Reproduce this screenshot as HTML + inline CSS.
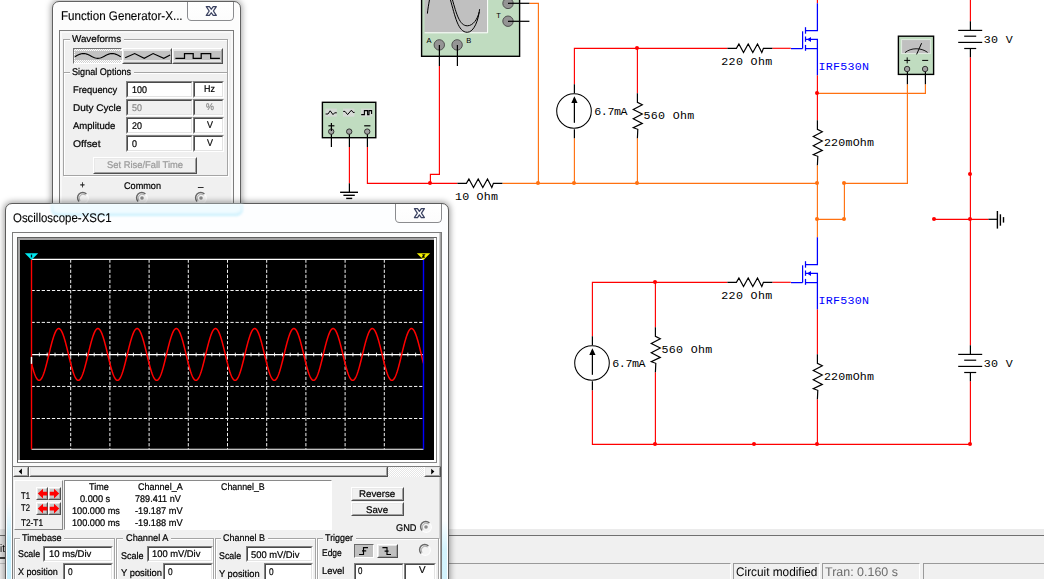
<!DOCTYPE html>
<html><head><meta charset="utf-8"><title>Multisim</title>
<style>

html,body{margin:0;padding:0}
html{width:1044px;height:579px;overflow:hidden}
body{width:1044px;height:579px;overflow:hidden;background:#fff;position:relative;font-family:"Liberation Sans",sans-serif}
.a{position:absolute}
.t{white-space:nowrap;font-family:"Liberation Sans",sans-serif;-webkit-text-stroke:0.22px currentColor;text-rendering:geometricPrecision}
#root{position:absolute;left:0;top:0;width:1044px;height:579px;overflow:hidden;background:#fff}
#ckt{position:absolute;left:0;top:0}

</style></head>
<body>
<div id="root">
<div class="a " style="left:0px;top:529px;width:1044px;height:7px;background:#ebebeb;"></div>
<div class="a " style="left:0px;top:535.2px;width:1044px;height:1.2px;background:#707070;"></div>
<div class="a " style="left:0px;top:536.4px;width:1044px;height:42.6px;background:#f0f0f0;"></div>
<div class="a " style="left:-5px;top:562.6px;width:736px;height:27.4px;border-top:1px solid #9a9a9a;border-left:1px solid #9a9a9a;border-right:1px solid #fff;box-sizing:border-box;"></div>
<div class="a " style="left:733px;top:562.6px;width:86.6px;height:27.4px;border-top:1px solid #9a9a9a;border-left:1px solid #9a9a9a;border-right:1px solid #fff;box-sizing:border-box;"></div>
<div class="a " style="left:822px;top:562.6px;width:98.2px;height:27.4px;border-top:1px solid #9a9a9a;border-left:1px solid #9a9a9a;border-right:1px solid #fff;box-sizing:border-box;"></div>
<div class="a " style="left:923.4px;top:562.6px;width:136.6px;height:27.4px;border-top:1px solid #9a9a9a;border-left:1px solid #9a9a9a;border-right:1px solid #fff;box-sizing:border-box;"></div>
<div class="a t" style="left:735.8px;top:565.89px;font-size:12.5px;line-height:12.5px;color:#000;transform-origin:0 10.58px;transform:scale(0.945,1);-webkit-text-stroke:0;">Circuit modified</div>
<div class="a t" style="left:825.4px;top:565.89px;font-size:12.5px;line-height:12.5px;color:#6d6d6d;transform-origin:0 10.58px;transform:scale(0.997,1);-webkit-text-stroke:0;">Tran: 0.160 s</div>
<div class="a " style="left:0px;top:536.4px;width:6px;height:21.6px;background:#e6e6e6;"></div>
<div class="a " style="left:0px;top:557.1px;width:6px;height:1.5px;background:#3c3c3c;"></div>
<div class="a " style="left:0px;top:562.8px;width:6px;height:1px;background:#c4c4c4;"></div>
<div class="a t" style="left:-0.4px;top:544.03px;font-size:11px;line-height:11px;color:#000;transform-origin:0 9.31px;transform:scale(0.873,1);-webkit-text-stroke:0;">it</div>
<svg id="ckt" width="1044" height="579" viewBox="0 0 1044 579">
<path d="M439.4 66 L439.4 174.3 L430.4 174.3 L430.4 183.3" stroke="#ff0000" stroke-width="1.15" fill="none" />
<path d="M349.4 147 L349.4 183.3" stroke="#ff0000" stroke-width="1.15" fill="none" />
<path d="M367.4 147 L367.4 183.3 L457.4 183.3" stroke="#ff0000" stroke-width="1.15" fill="none" />
<path d="M502.4 183.3 L817.4 183.3" stroke="#ff7110" stroke-width="1.15" fill="none" />
<path d="M529.4 3.3 L538.4 3.3 L538.4 183.3" stroke="#ff7110" stroke-width="1.15" fill="none" />
<path d="M574.4 84.3 L574.4 48.3 L727.4 48.3" stroke="#ff0000" stroke-width="1.15" fill="none" />
<path d="M637.4 48.3 L637.4 93.3" stroke="#ff0000" stroke-width="1.15" fill="none" />
<path d="M574.4 138.3 L574.4 183.3" stroke="#ff7110" stroke-width="1.15" fill="none" />
<path d="M637.4 138.3 L637.4 183.3" stroke="#ff7110" stroke-width="1.15" fill="none" />
<path d="M772.4 48.3 L790.8 48.3" stroke="#ff0000" stroke-width="1.15" fill="none" />
<path d="M817.4 0 L817.4 3.3" stroke="#ff0000" stroke-width="1.15" fill="none" />
<path d="M817.4 75.3 L817.4 120.3" stroke="#ff0000" stroke-width="1.15" fill="none" />
<path d="M817.4 93.3 L925.4 93.3 L925.4 84.3" stroke="#ff7110" stroke-width="1.15" fill="none" />
<path d="M907.4 84.3 L907.4 183.3 L844.4 183.3 L844.4 219.3 L817.4 219.3" stroke="#ff7110" stroke-width="1.15" fill="none" />
<path d="M817.4 165.3 L817.4 237.3" stroke="#ff7110" stroke-width="1.15" fill="none" />
<path d="M970.4 0 L970.4 21.3" stroke="#ff0000" stroke-width="1.15" fill="none" />
<path d="M970.4 57.3 L970.4 345.3" stroke="#ff0000" stroke-width="1.15" fill="none" />
<path d="M970.4 381.3 L970.4 444.3 L592.4 444.3 L592.4 390.3" stroke="#ff0000" stroke-width="1.15" fill="none" />
<path d="M934.4 219.3 L988.4 219.3" stroke="#ff0000" stroke-width="1.15" fill="none" />
<path d="M592.4 336.3 L592.4 282.3 L727.4 282.3" stroke="#ff0000" stroke-width="1.15" fill="none" />
<path d="M655.4 282.3 L655.4 327.3" stroke="#ff0000" stroke-width="1.15" fill="none" />
<path d="M655.4 372.3 L655.4 444.3" stroke="#ff0000" stroke-width="1.15" fill="none" />
<path d="M772.4 282.3 L790.8 282.3" stroke="#ff0000" stroke-width="1.15" fill="none" />
<path d="M817.4 309.3 L817.4 354.3" stroke="#ff0000" stroke-width="1.15" fill="none" />
<path d="M817.4 399.3 L817.4 444.3" stroke="#ff0000" stroke-width="1.15" fill="none" />
<path d="M457.4 183.3 L466.4 183.3 L468.9 179 L473.5 187.6 L478.2 179 L482.8 187.6 L487.5 179 L491.8 187.6 L493.4 183.3 L502.4 183.3" stroke="#000000" stroke-width="1.18" fill="none" stroke-linejoin="miter"/>
<text x="455" y="199.9" fill="#000" font-size="11.67" font-family="Liberation Mono" letter-spacing="0.2">10 Ohm</text>
<path d="M727.4 48.3 L736.4 48.3 L738.9 44 L743.5 52.6 L748.2 44 L752.8 52.6 L757.5 44 L761.8 52.6 L763.4 48.3 L772.4 48.3" stroke="#000000" stroke-width="1.18" fill="none" stroke-linejoin="miter"/>
<text x="721.2" y="64.9" fill="#000" font-size="11.67" font-family="Liberation Mono" letter-spacing="0.35">220 Ohm</text>
<path d="M727.4 282.3 L736.4 282.3 L738.9 278 L743.5 286.6 L748.2 278 L752.8 286.6 L757.5 278 L761.8 286.6 L763.4 282.3 L772.4 282.3" stroke="#000000" stroke-width="1.18" fill="none" stroke-linejoin="miter"/>
<text x="721.2" y="298.9" fill="#000" font-size="11.67" font-family="Liberation Mono" letter-spacing="0.35">220 Ohm</text>
<path d="M574.4 84.3 L574.4 93.3" stroke="#000000" stroke-width="1.2" fill="none" />
<path d="M574.4 129.3 L574.4 138.3" stroke="#000000" stroke-width="1.2" fill="none" />
<circle cx="574" cy="111" r="17.3" stroke="#000" stroke-width="1.05" fill="none"/>
<path d="M574.4 122.8 L574.4 98.3" stroke="#000000" stroke-width="1.25" fill="none" />
<path d="M574.4 96.3 L571.3 103.1 L577.5 103.1 Z" fill="#000"/>
<text x="594.2" y="115" fill="#000" font-size="11.67" font-family="Liberation Mono" letter-spacing="-0.4">6.7mA</text>
<path d="M637.4 93.3 L637.4 102.3 L642.31 104.8 L633.28 109.4 L642.31 114.1 L633.28 118.7 L642.31 123.4 L633.28 127.7 L637.8 129.3 L637.4 138.3" stroke="#000000" stroke-width="1.18" fill="none" stroke-linejoin="miter"/>
<text x="643.5" y="118.8" fill="#000" font-size="11.67" font-family="Liberation Mono" letter-spacing="0.3">560 Ohm</text>
<path d="M592.4 336.3 L592.4 345.3" stroke="#000000" stroke-width="1.2" fill="none" />
<path d="M592.4 381.3 L592.4 390.3" stroke="#000000" stroke-width="1.2" fill="none" />
<circle cx="592" cy="363" r="17.3" stroke="#000" stroke-width="1.05" fill="none"/>
<path d="M592.4 374.8 L592.4 350.3" stroke="#000000" stroke-width="1.25" fill="none" />
<path d="M592.4 348.3 L589.3 355.1 L595.5 355.1 Z" fill="#000"/>
<text x="612.2" y="367" fill="#000" font-size="11.67" font-family="Liberation Mono" letter-spacing="-0.4">6.7mA</text>
<path d="M655.4 327.3 L655.4 336.3 L660.31 338.8 L651.28 343.4 L660.31 348.1 L651.28 352.7 L660.31 357.4 L651.28 361.7 L655.8 363.3 L655.4 372.3" stroke="#000000" stroke-width="1.18" fill="none" stroke-linejoin="miter"/>
<text x="661.5" y="352.8" fill="#000" font-size="11.67" font-family="Liberation Mono" letter-spacing="0.3">560 Ohm</text>
<path d="M817.4 120.3 L817.4 129.3 L822.31 131.8 L813.28 136.4 L822.31 141.1 L813.28 145.7 L822.31 150.4 L813.28 154.7 L817.8 156.3 L817.4 165.3" stroke="#000000" stroke-width="1.18" fill="none" stroke-linejoin="miter"/>
<text x="823.9" y="146.4" fill="#000" font-size="11.67" font-family="Liberation Mono" letter-spacing="0.2">220mOhm</text>
<path d="M817.4 354.3 L817.4 363.3 L822.31 365.8 L813.28 370.4 L822.31 375.1 L813.28 379.7 L822.31 384.4 L813.28 388.7 L817.8 390.3 L817.4 399.3" stroke="#000000" stroke-width="1.18" fill="none" stroke-linejoin="miter"/>
<text x="823.9" y="380.4" fill="#000" font-size="11.67" font-family="Liberation Mono" letter-spacing="0.2">220mOhm</text>
<path d="M817.4 3.3 L817.4 30.7 L805.5 30.7" stroke="#0000ff" stroke-width="1.25" fill="none" />
<path d="M805.5 27.2 L805.5 33.7" stroke="#0000ff" stroke-width="1.25" fill="none" />
<path d="M805.5 36.5 L805.5 41.8" stroke="#0000ff" stroke-width="1.25" fill="none" />
<path d="M805.5 44.9 L805.5 50.8" stroke="#0000ff" stroke-width="1.25" fill="none" />
<path d="M802.6 31.3 L802.6 48.6" stroke="#0000ff" stroke-width="1.25" fill="none" />
<path d="M791 48.6 L802.6 48.6" stroke="#0000ff" stroke-width="1.25" fill="none" />
<path d="M805.5 39.4 L817.4 39.4 L817.4 75.3" stroke="#0000ff" stroke-width="1.25" fill="none" />
<path d="M805.5 48.6 L817.4 48.6" stroke="#0000ff" stroke-width="1.25" fill="none" />
<path d="M807 39.4 L811 36.9 L811 41.9 Z" fill="#0000ff"/>
<text x="818.6" y="69.9" fill="#0000ff" font-size="11.67" font-family="Liberation Mono" letter-spacing="0.25">IRF530N</text>
<path d="M817.4 237.3 L817.4 264.7 L805.5 264.7" stroke="#0000ff" stroke-width="1.25" fill="none" />
<path d="M805.5 261.2 L805.5 267.7" stroke="#0000ff" stroke-width="1.25" fill="none" />
<path d="M805.5 270.5 L805.5 275.8" stroke="#0000ff" stroke-width="1.25" fill="none" />
<path d="M805.5 278.9 L805.5 284.8" stroke="#0000ff" stroke-width="1.25" fill="none" />
<path d="M802.6 265.3 L802.6 282.6" stroke="#0000ff" stroke-width="1.25" fill="none" />
<path d="M791 282.6 L802.6 282.6" stroke="#0000ff" stroke-width="1.25" fill="none" />
<path d="M805.5 273.4 L817.4 273.4 L817.4 309.3" stroke="#0000ff" stroke-width="1.25" fill="none" />
<path d="M805.5 282.6 L817.4 282.6" stroke="#0000ff" stroke-width="1.25" fill="none" />
<path d="M807 273.4 L811 270.9 L811 275.9 Z" fill="#0000ff"/>
<text x="818.6" y="303.9" fill="#0000ff" font-size="11.67" font-family="Liberation Mono" letter-spacing="0.25">IRF530N</text>
<path d="M970.4 21.3 L970.4 30.3" stroke="#000000" stroke-width="1.2" fill="none" />
<path d="M958.2 30.4 L982.2 30.4" stroke="#000000" stroke-width="1.2" fill="none" />
<path d="M964.2 36.2 L976.2 36.2" stroke="#000000" stroke-width="1.2" fill="none" />
<path d="M958.2 42.4 L982.2 42.4" stroke="#000000" stroke-width="1.2" fill="none" />
<path d="M964.2 48.5 L976.2 48.5" stroke="#000000" stroke-width="1.2" fill="none" />
<path d="M970.4 48.5 L970.4 57.3" stroke="#000000" stroke-width="1.2" fill="none" />
<text x="983.7" y="42.9" fill="#000" font-size="11.67" font-family="Liberation Mono" letter-spacing="0.35">30 V</text>
<path d="M970.4 345.3 L970.4 354.3" stroke="#000000" stroke-width="1.2" fill="none" />
<path d="M958.2 354.4 L982.2 354.4" stroke="#000000" stroke-width="1.2" fill="none" />
<path d="M964.2 360.2 L976.2 360.2" stroke="#000000" stroke-width="1.2" fill="none" />
<path d="M958.2 366.4 L982.2 366.4" stroke="#000000" stroke-width="1.2" fill="none" />
<path d="M964.2 372.5 L976.2 372.5" stroke="#000000" stroke-width="1.2" fill="none" />
<path d="M970.4 372.5 L970.4 381.3" stroke="#000000" stroke-width="1.2" fill="none" />
<text x="983.7" y="366.9" fill="#000" font-size="11.67" font-family="Liberation Mono" letter-spacing="0.35">30 V</text>
<path d="M988.4 219.3 L997.4 219.3" stroke="#000000" stroke-width="1.2" fill="none" />
<path d="M997.4 211 L997.4 228.6" stroke="#000000" stroke-width="1.4" fill="none" />
<path d="M1000.4 214.3 L1000.4 225.7" stroke="#000000" stroke-width="1.4" fill="none" />
<path d="M1003.5 217.1 L1003.5 222.6" stroke="#000000" stroke-width="1.4" fill="none" />
<path d="M349.4 183.3 L349.4 192.3" stroke="#000000" stroke-width="1.2" fill="none" />
<path d="M340.1 192.3 L358 192.3" stroke="#000000" stroke-width="1.4" fill="none" />
<path d="M343.4 195.3 L354.8 195.3" stroke="#000000" stroke-width="1.4" fill="none" />
<path d="M346.2 198.4 L352.2 198.4" stroke="#000000" stroke-width="1.4" fill="none" />
<circle cx="430" cy="182.9" r="2" fill="#ff0000"/>
<circle cx="538" cy="182.9" r="2" fill="#ff7110"/>
<circle cx="574" cy="182.9" r="2" fill="#ff7110"/>
<circle cx="637" cy="182.9" r="2" fill="#ff7110"/>
<circle cx="817" cy="182.9" r="2" fill="#ff7110"/>
<circle cx="844" cy="182.9" r="2" fill="#ff7110"/>
<circle cx="817" cy="218.9" r="2" fill="#ff7110"/>
<circle cx="844" cy="218.9" r="2" fill="#ff7110"/>
<circle cx="637" cy="47.9" r="2" fill="#ff0000"/>
<circle cx="817" cy="92.9" r="2" fill="#ff0000"/>
<circle cx="970" cy="173.9" r="2" fill="#ff0000"/>
<circle cx="970" cy="218.9" r="2" fill="#ff0000"/>
<circle cx="934" cy="218.9" r="2" fill="#ff0000"/>
<circle cx="655" cy="281.9" r="2" fill="#ff0000"/>
<circle cx="655" cy="443.9" r="2" fill="#ff0000"/>
<circle cx="754" cy="443.9" r="2" fill="#ff0000"/>
<circle cx="817" cy="443.9" r="2" fill="#ff0000"/>
<circle cx="970" cy="443.9" r="2" fill="#ff0000"/>
<rect x="421.6" y="-5" width="98" height="61.3" fill="#c0dcc0" stroke="#000" stroke-width="1.4"/>
<rect x="424.6" y="-5" width="62.5" height="37.3" fill="#c0c0c0"/>
<path d="M424.6 32.8 H487.6 V-5" stroke="#fff" stroke-width="1" fill="none"/>
<path d="M429.6 -1 C428.6 5 427.8 9 427.4 13.6" stroke="#000" stroke-width="1" fill="none"/>
<path d="M450.2 -1 C455 16 458 32.3 467.3 32.3 C474 32.3 478.5 20 479.6 9.2" stroke="#000" stroke-width="1" fill="none"/>
<path d="M452.2 -1 C456.5 14 459.5 25.8 467.3 25.8 C473.2 25.8 477.5 19 479.2 12" stroke="#000" stroke-width="1" fill="none"/>
<circle cx="439.3" cy="44.9" r="5.2" fill="#949494" stroke="#505050" stroke-width="1"/>
<circle cx="457.1" cy="44.9" r="5.2" fill="#949494" stroke="#505050" stroke-width="1"/>
<circle cx="508" cy="3.4" r="5.2" fill="#949494" stroke="#505050" stroke-width="1"/>
<circle cx="508" cy="21.2" r="5.2" fill="#949494" stroke="#505050" stroke-width="1"/>
<path d="M439.4 44.9 L439.4 66" stroke="#000000" stroke-width="1.2" fill="none" />
<path d="M457.4 44.9 L457.4 66" stroke="#000000" stroke-width="1.2" fill="none" />
<path d="M508 3.3 L529.4 3.3" stroke="#000000" stroke-width="1.2" fill="none" />
<path d="M508 21.3 L529.4 21.3" stroke="#000000" stroke-width="1.2" fill="none" />
<text x="426.6" y="42.6" fill="#000" font-size="7.5" font-family="Liberation Sans" >A</text>
<text x="466.2" y="42.6" fill="#000" font-size="7.5" font-family="Liberation Sans" >B</text>
<text x="496.2" y="18.2" fill="#000" font-size="7.5" font-family="Liberation Sans" >T</text>
<rect x="322.4" y="102.3" width="53.4" height="35.4" fill="#c0dcc0" stroke="#000" stroke-width="1.4"/>
<rect x="325.4" y="108.6" width="11.4" height="8" fill="#d6dad6"/>
<rect x="343" y="108.6" width="11.4" height="8" fill="#d6dad6"/>
<rect x="361" y="108.6" width="11.4" height="8" fill="#d6dad6"/>
<path d="M325.6 114 H328 L330.2 110.8 L333 114.6 L334.6 112.8 H336.8" stroke="#000" stroke-width="1" fill="none"/>
<path d="M343.2 111.4 H345 L347.6 114.6 L351.4 110.2 L353 112.4 H354.6" stroke="#000" stroke-width="1" fill="none"/>
<path d="M361.2 114.6 H364.4 V110.6 H367.6 V114.6 H369 V110.6 H371.6 V114" stroke="#000" stroke-width="1.1" fill="none"/>
<path d="M331.4 131.6 L331.4 147" stroke="#000000" stroke-width="1.2" fill="none" />
<circle cx="331.2" cy="131.6" r="2.7" fill="#a0a0a0" stroke="#222" stroke-width="0.9"/>
<path d="M349.4 131.6 L349.4 147" stroke="#000000" stroke-width="1.2" fill="none" />
<circle cx="349.2" cy="131.6" r="2.7" fill="#a0a0a0" stroke="#222" stroke-width="0.9"/>
<path d="M367.4 131.6 L367.4 147" stroke="#000000" stroke-width="1.2" fill="none" />
<circle cx="367.2" cy="131.6" r="2.7" fill="#a0a0a0" stroke="#222" stroke-width="0.9"/>
<path d="M331.4 123 L331.4 131" stroke="#000000" stroke-width="1.2" fill="none" />
<path d="M328.4 125.8 L334.4 125.8" stroke="#000000" stroke-width="1.2" fill="none" />
<path d="M364.2 125.8 L370.4 125.8" stroke="#000000" stroke-width="1.2" fill="none" />
<rect x="898.4" y="36.2" width="35.2" height="38.2" fill="#c0dcc0" stroke="#000" stroke-width="1.4"/>
<rect x="901.6" y="39.6" width="28.8" height="14" fill="#c0c0c0" stroke="#e4efe4" stroke-width="0.9"/>
<path d="M905 52.6 C911 47.6 921 47.4 927.6 52.4" stroke="#000" stroke-width="0.9" fill="none"/>
<path d="M916.6 54.4 L921.6 43.2" stroke="#000" stroke-width="1" fill="none"/>
<path d="M904.2 60.4 L910.2 60.4" stroke="#000000" stroke-width="1.0" fill="none" />
<path d="M907.2 57.4 L907.2 63.4" stroke="#000000" stroke-width="1.0" fill="none" />
<path d="M922.2 60.4 L928.2 60.4" stroke="#000000" stroke-width="1.0" fill="none" />
<path d="M907.4 69 L907.4 84.3" stroke="#000000" stroke-width="1.2" fill="none" />
<circle cx="907.1" cy="69" r="2.7" fill="#a0a0a0" stroke="#222" stroke-width="0.9"/>
<path d="M925.4 69 L925.4 84.3" stroke="#000000" stroke-width="1.2" fill="none" />
<circle cx="925.1" cy="69" r="2.7" fill="#a0a0a0" stroke="#222" stroke-width="0.9"/>
</svg>
<div class="a " style="left:52px;top:1px;width:189px;height:259px;background:#fcfcfc;border:1px solid #616161;border-radius:7px;box-sizing:border-box;box-shadow:0 0 6px 0.5px rgba(0,0,0,.36), inset 0 0 0 1px #fff;"></div>
<div class="a t" style="left:60.9px;top:10.04px;font-size:12.6px;line-height:12.6px;color:#000;transform-origin:0 10.67px;transform:scale(0.924,1);-webkit-text-stroke:0.12px #000;">Function Generator-X...</div>
<div class="a " style="left:187.4px;top:2px;width:46.4px;height:18.5px;background:linear-gradient(#fff,#fcfcfc);border:1px solid #8b8c8f;border-top:none;border-radius:0 0 4.5px 4.5px;box-sizing:border-box;"></div>
<svg class="a" style="left:0;top:0" width="460" height="240" viewBox="0 0 460 240"><path d="M206.3 6.55 H209.4 L211.3 9.25 L213.2 6.55 H216.3 L213.4 11 L216.3 15.45 H213.2 L211.3 12.75 L209.4 15.45 H206.3 L209.2 11 Z" fill="#fafbfd" stroke="#3a4160" stroke-width="1.25" stroke-linejoin="round"/></svg>
<div class="a " style="left:59.3px;top:30px;width:175px;height:210px;background:#f0f0f0;border:1px solid #7b7b7b;box-sizing:border-box;box-shadow:inset 0 0 0 2px #f8f8f8;"></div>
<div class="a " style="left:62.9px;top:39.2px;width:165.3px;height:136.6px;border:1px solid #a5a5a5;box-sizing:border-box;box-shadow:1px 1px 0 #fff, inset 1px 1px 0 #fff;"></div>
<div class="a " style="left:69.9px;top:37.2px;width:54.2px;height:5px;background:#f0f0f0;"></div>
<div class="a t" style="left:72.4px;top:35px;font-size:9.7px;line-height:9.7px;color:#000;transform-origin:0 8.21px;transform:scale(1.011,1);">Waveforms</div>
<div class="a " style="left:63.9px;top:71.6px;width:163.3px;height:2px;border-top:1px solid #a5a5a5;border-bottom:1px solid #fff;box-sizing:border-box;"></div>
<div class="a " style="left:70px;top:69px;width:64px;height:7px;background:#f0f0f0;"></div>
<div class="a t" style="left:72.4px;top:68px;font-size:9.7px;line-height:9.7px;color:#000;transform-origin:0 8.21px;transform:scale(0.938,1);">Signal Options</div>
<div class="a " style="left:73.2px;top:47.8px;width:49.2px;height:16.4px;background:#fff;border:1px solid #707070;border-right-color:#fff;border-bottom-color:#fff;box-sizing:border-box;background-image:repeating-conic-gradient(#fff 0 25%, #d0d0d0 0 50%);background-size:2px 2px;"></div>
<div class="a " style="left:74.6px;top:51.4px;width:47.8px;height:8.6px;background:#c2c2c2;"></div>
<div class="a " style="left:122.4px;top:47.8px;width:50px;height:16.6px;background:#e6e6e6;border-top:1px solid #fff;border-left:1px solid #fff;border-right:1px solid #505050;border-bottom:1px solid #505050;box-sizing:border-box;"></div>
<div class="a " style="left:123.4px;top:48.8px;width:48px;height:14.6px;border-top:1px solid #e8e8e8;border-left:1px solid #e8e8e8;border-right:1px solid #a0a0a0;border-bottom:1px solid #a0a0a0;box-sizing:border-box;"></div>
<div class="a " style="left:123.8px;top:51.4px;width:47.2px;height:8.6px;background:#c2c2c2;"></div>
<div class="a " style="left:172.4px;top:47.8px;width:50.4px;height:16.6px;background:#e6e6e6;border-top:1px solid #fff;border-left:1px solid #fff;border-right:1px solid #505050;border-bottom:1px solid #505050;box-sizing:border-box;"></div>
<div class="a " style="left:173.4px;top:48.8px;width:48.4px;height:14.6px;border-top:1px solid #e8e8e8;border-left:1px solid #e8e8e8;border-right:1px solid #a0a0a0;border-bottom:1px solid #a0a0a0;box-sizing:border-box;"></div>
<div class="a " style="left:173.8px;top:51.4px;width:47.6px;height:8.6px;background:#c2c2c2;"></div>
<svg class="a" style="left:0;top:0" width="260" height="80" viewBox="0 0 260 80"><path d="M74.7 56.75 L75.8 56.19 L76.9 55.61 L78.0 55.05 L79.1 54.54 L80.2 54.10 L81.3 53.77 L82.4 53.57 L83.5 53.50 L84.6 53.57 L85.7 53.77 L86.8 54.10 L87.9 54.54 L89.0 55.05 L90.1 55.61 L91.2 56.19 L92.3 56.75 L93.4 57.26 L94.5 57.70 L95.6 58.03 L96.7 58.23 L97.8 58.30 L98.9 58.23 L100.0 58.03 L101.1 57.70 L102.2 57.26 L103.3 56.75 L104.4 56.19 L105.5 55.61 L106.6 55.05 L107.7 54.54 L108.8 54.10 L109.9 53.77 L111.0 53.57 L112.1 53.50 L113.2 53.57 L114.3 53.77 L115.4 54.10 L116.5 54.54 L117.6 55.05 L118.7 55.61 L119.8 56.19 L120.9 56.75" stroke="#000" stroke-width="1.15" fill="none"/><path d="M125.2 57.8 L134.7 53.5 L144.2 58.3 L153.1 53.5 L163.8 58.3 L170.2 55.1" stroke="#000" stroke-width="1.1" fill="none"/><path d="M175.4 58.3 H184.5 V53.5 H193.2 V58.3 H201.2 V53.5 H210.7 V58.3 H219.9" stroke="#000" stroke-width="1.25" fill="none"/></svg>
<div class="a t" style="left:73.4px;top:86px;font-size:9.7px;line-height:9.7px;color:#000;transform-origin:0 8.21px;transform:scale(0.964,1);">Frequency</div>
<div class="a " style="left:126.2px;top:81.2px;width:66.4px;height:16.5px;background:#fff;border-top:1px solid #828282;border-left:1px solid #828282;border-right:1px solid #fff;border-bottom:1px solid #fff;box-sizing:border-box;"></div>
<div class="a " style="left:127.2px;top:82.2px;width:64.4px;height:14.5px;border-top:1px solid #4a4a4a;border-left:1px solid #4a4a4a;border-right:1px solid #e3e3e3;border-bottom:1px solid #e3e3e3;box-sizing:border-box;"></div>
<div class="a " style="left:192.6px;top:81.2px;width:31.1px;height:16.5px;background:#fff;border-top:1px solid #828282;border-left:1px solid #828282;border-right:1px solid #fff;border-bottom:1px solid #fff;box-sizing:border-box;"></div>
<div class="a " style="left:193.6px;top:82.2px;width:29.1px;height:14.5px;border-top:1px solid #4a4a4a;border-left:1px solid #4a4a4a;border-right:1px solid #e3e3e3;border-bottom:1px solid #e3e3e3;box-sizing:border-box;"></div>
<div class="a t" style="left:131.6px;top:86px;font-size:9.7px;line-height:9.7px;color:#000;transform-origin:0 8.21px;transform:scale(0.920,1);">100</div>
<div class="a t" style="left:204.15px;top:85px;font-size:9.7px;line-height:9.7px;color:#000;transform-origin:0 8.21px;transform:scale(0.920,1);">Hz</div>
<div class="a t" style="left:73.4px;top:104px;font-size:9.7px;line-height:9.7px;color:#000;transform-origin:0 8.21px;transform:scale(1.033,1);">Duty Cycle</div>
<div class="a " style="left:126.2px;top:99.4px;width:66.4px;height:16.5px;background:#f0f0f0;border-top:1px solid #828282;border-left:1px solid #828282;border-right:1px solid #fff;border-bottom:1px solid #fff;box-sizing:border-box;"></div>
<div class="a " style="left:127.2px;top:100.4px;width:64.4px;height:14.5px;border-top:1px solid #4a4a4a;border-left:1px solid #4a4a4a;border-right:1px solid #e3e3e3;border-bottom:1px solid #e3e3e3;box-sizing:border-box;"></div>
<div class="a " style="left:192.6px;top:99.4px;width:31.1px;height:16.5px;background:#f0f0f0;border-top:1px solid #828282;border-left:1px solid #828282;border-right:1px solid #fff;border-bottom:1px solid #fff;box-sizing:border-box;"></div>
<div class="a " style="left:193.6px;top:100.4px;width:29.1px;height:14.5px;border-top:1px solid #4a4a4a;border-left:1px solid #4a4a4a;border-right:1px solid #e3e3e3;border-bottom:1px solid #e3e3e3;box-sizing:border-box;"></div>
<div class="a t" style="left:131.6px;top:104px;font-size:9.7px;line-height:9.7px;color:#8a8a8a;transform-origin:0 8.21px;transform:scale(0.920,1);">50</div>
<div class="a t" style="left:205.63px;top:103px;font-size:9.7px;line-height:9.7px;color:#8a8a8a;transform-origin:0 8.21px;transform:scale(0.920,1);">%</div>
<div class="a t" style="left:73.4px;top:122px;font-size:9.7px;line-height:9.7px;color:#000;transform-origin:0 8.21px;transform:scale(0.983,1);">Amplitude</div>
<div class="a " style="left:126.2px;top:117.4px;width:66.4px;height:16.5px;background:#fff;border-top:1px solid #828282;border-left:1px solid #828282;border-right:1px solid #fff;border-bottom:1px solid #fff;box-sizing:border-box;"></div>
<div class="a " style="left:127.2px;top:118.4px;width:64.4px;height:14.5px;border-top:1px solid #4a4a4a;border-left:1px solid #4a4a4a;border-right:1px solid #e3e3e3;border-bottom:1px solid #e3e3e3;box-sizing:border-box;"></div>
<div class="a " style="left:192.6px;top:117.4px;width:31.1px;height:16.5px;background:#fff;border-top:1px solid #828282;border-left:1px solid #828282;border-right:1px solid #fff;border-bottom:1px solid #fff;box-sizing:border-box;"></div>
<div class="a " style="left:193.6px;top:118.4px;width:29.1px;height:14.5px;border-top:1px solid #4a4a4a;border-left:1px solid #4a4a4a;border-right:1px solid #e3e3e3;border-bottom:1px solid #e3e3e3;box-sizing:border-box;"></div>
<div class="a t" style="left:131.6px;top:122px;font-size:9.7px;line-height:9.7px;color:#000;transform-origin:0 8.21px;transform:scale(0.920,1);">20</div>
<div class="a t" style="left:206.62px;top:121px;font-size:9.7px;line-height:9.7px;color:#000;transform-origin:0 8.21px;transform:scale(0.920,1);">V</div>
<div class="a t" style="left:73.2px;top:140px;font-size:9.7px;line-height:9.7px;color:#000;transform-origin:0 8.21px;transform:scale(1.073,1);">Offset</div>
<div class="a " style="left:126.2px;top:135.4px;width:66.4px;height:16.5px;background:#fff;border-top:1px solid #828282;border-left:1px solid #828282;border-right:1px solid #fff;border-bottom:1px solid #fff;box-sizing:border-box;"></div>
<div class="a " style="left:127.2px;top:136.4px;width:64.4px;height:14.5px;border-top:1px solid #4a4a4a;border-left:1px solid #4a4a4a;border-right:1px solid #e3e3e3;border-bottom:1px solid #e3e3e3;box-sizing:border-box;"></div>
<div class="a " style="left:192.6px;top:135.4px;width:31.1px;height:16.5px;background:#fff;border-top:1px solid #828282;border-left:1px solid #828282;border-right:1px solid #fff;border-bottom:1px solid #fff;box-sizing:border-box;"></div>
<div class="a " style="left:193.6px;top:136.4px;width:29.1px;height:14.5px;border-top:1px solid #4a4a4a;border-left:1px solid #4a4a4a;border-right:1px solid #e3e3e3;border-bottom:1px solid #e3e3e3;box-sizing:border-box;"></div>
<div class="a t" style="left:131.6px;top:140px;font-size:9.7px;line-height:9.7px;color:#000;transform-origin:0 8.21px;transform:scale(0.920,1);">0</div>
<div class="a t" style="left:206.62px;top:139px;font-size:9.7px;line-height:9.7px;color:#000;transform-origin:0 8.21px;transform:scale(0.920,1);">V</div>
<div class="a " style="left:93.2px;top:157.2px;width:103.8px;height:16.4px;background:#f0f0f0;border-top:1px solid #fff;border-left:1px solid #fff;border-right:1px solid #505050;border-bottom:1px solid #505050;box-sizing:border-box;"></div>
<div class="a " style="left:94.2px;top:158.2px;width:101.8px;height:14.4px;border-top:1px solid #e8e8e8;border-left:1px solid #e8e8e8;border-right:1px solid #a0a0a0;border-bottom:1px solid #a0a0a0;box-sizing:border-box;"></div>
<div class="a t" style="left:106.6px;top:161px;font-size:9.7px;line-height:9.7px;color:#9a9a9a;transform-origin:0 8.21px;transform:scale(0.968,1);">Set Rise/Fall Time</div>
<div class="a t" style="left:80.3px;top:181px;font-size:9.7px;line-height:9.7px;color:#000;transform-origin:0 8.21px;transform:scale(0.843,1);">+</div>
<div class="a t" style="left:123.6px;top:182px;font-size:9.7px;line-height:9.7px;color:#000;transform-origin:0 8.21px;transform:scale(0.940,1);">Common</div>
<div class="a t" style="left:197.7px;top:183px;font-size:9.7px;line-height:9.7px;color:#000;transform-origin:0 8.21px;transform:scale(0.992,1);">–</div>
<svg class="a" style="left:75.7px;top:190.6px" width="14" height="14" viewBox="0 0 14 14"><circle cx="7" cy="7" r="5" fill="#f4f4f4"/><path d="M3.1 10.4 A5 5 0 0 1 10.4 3.1" stroke="#686868" stroke-width="1.45" fill="none"/><path d="M10.9 3.6 A5 5 0 0 1 3.6 10.9" stroke="#fdfdfd" stroke-width="1.2" fill="none"/><path d="M4 9.6 A4 4 0 0 1 9.6 4" stroke="#a8a8a8" stroke-width="1" fill="none"/></svg>
<svg class="a" style="left:135px;top:190.6px" width="14" height="14" viewBox="0 0 14 14"><circle cx="7" cy="7" r="5" fill="#f4f4f4"/><path d="M3.1 10.4 A5 5 0 0 1 10.4 3.1" stroke="#686868" stroke-width="1.45" fill="none"/><path d="M10.9 3.6 A5 5 0 0 1 3.6 10.9" stroke="#fdfdfd" stroke-width="1.2" fill="none"/><path d="M4 9.6 A4 4 0 0 1 9.6 4" stroke="#a8a8a8" stroke-width="1" fill="none"/><circle cx="7" cy="7" r="1.8" fill="#8c8c8c"/></svg>
<svg class="a" style="left:193.8px;top:190.6px" width="14" height="14" viewBox="0 0 14 14"><circle cx="7" cy="7" r="5" fill="#f4f4f4"/><path d="M3.1 10.4 A5 5 0 0 1 10.4 3.1" stroke="#686868" stroke-width="1.45" fill="none"/><path d="M10.9 3.6 A5 5 0 0 1 3.6 10.9" stroke="#fdfdfd" stroke-width="1.2" fill="none"/><path d="M4 9.6 A4 4 0 0 1 9.6 4" stroke="#a8a8a8" stroke-width="1" fill="none"/><circle cx="7" cy="7" r="1.8" fill="#8c8c8c"/></svg>
<div class="a " style="left:5.4px;top:203.3px;width:443.2px;height:436.7px;background:#fdfeff;border:1px solid #5c5c5c;border-radius:7px;box-sizing:border-box;box-shadow:0 0 6px 0.5px rgba(0,0,0,.4), inset 0 0 0 1px #fff;"></div>
<div class="a " style="left:51px;top:204.4px;width:192.4px;height:11.2px;background:rgba(236,250,255,.8);border-radius:0 0 7px 7px;box-shadow:inset 0 -1.5px 3px 0px rgba(160,226,250,.7);filter:blur(1.1px);"></div>
<div class="a " style="left:6.6px;top:500px;width:4px;height:100px;background:linear-gradient(rgba(190,236,252,0), rgba(190,236,252,.9) 40px);filter:blur(.6px);"></div>
<div class="a " style="left:442px;top:520px;width:5.4px;height:80px;background:linear-gradient(rgba(200,240,252,0), rgba(200,240,252,.8) 30px);"></div>
<div class="a t" style="left:13.2px;top:211.84px;font-size:12.6px;line-height:12.6px;color:#000;transform-origin:0 10.67px;transform:scale(0.908,1);-webkit-text-stroke:0.12px #000;">Oscilloscope-XSC1</div>
<div class="a " style="left:395.2px;top:204.3px;width:46.4px;height:18.5px;background:linear-gradient(#fff,#fcfcfc);border:1px solid #8b8c8f;border-top:none;border-radius:0 0 4.5px 4.5px;box-sizing:border-box;"></div>
<svg class="a" style="left:0;top:0" width="460" height="240" viewBox="0 0 460 240"><path d="M414.4 208.65 H417.5 L419.4 211.35 L421.3 208.65 H424.4 L421.5 213.1 L424.4 217.55 H421.3 L419.4 214.85 L417.5 217.55 H414.4 L417.3 213.1 Z" fill="#fafbfd" stroke="#3a4160" stroke-width="1.25" stroke-linejoin="round"/></svg>
<div class="a " style="left:12.4px;top:232.4px;width:429.4px;height:407.6px;background:#f0f0f0;border:1px solid #7b7b7b;box-sizing:border-box;"></div>
<div class="a " style="left:13.4px;top:233.4px;width:427.4px;height:232.4px;background:#fbfbfb;"></div>
<div class="a " style="left:16.9px;top:236.8px;width:420.5px;height:226px;background:#fff;border-top:1.1px solid #606060;border-left:1.1px solid #606060;border-right:1px solid #868686;border-bottom:1px solid #868686;box-sizing:border-box;"></div>
<div class="a " style="left:18px;top:237.9px;width:416.3px;height:221.8px;background:#a4a4a4;"></div>
<div class="a " style="left:20.3px;top:240.2px;width:414px;height:219.5px;background:#000;"></div>
<svg class="a" style="left:0;top:0" width="460" height="579" viewBox="0 0 460 579"><style>.dg{stroke:#f2f2f2;stroke-width:1;stroke-dasharray:3.3 1.8}</style><line x1="70.7" y1="259.45" x2="70.7" y2="449.25" class="dg"/>
<line x1="109.9" y1="259.45" x2="109.9" y2="449.25" class="dg"/>
<line x1="149.1" y1="259.45" x2="149.1" y2="449.25" class="dg"/>
<line x1="188.3" y1="259.45" x2="188.3" y2="449.25" class="dg"/>
<line x1="227.5" y1="259.45" x2="227.5" y2="449.25" class="dg"/>
<line x1="266.7" y1="259.45" x2="266.7" y2="449.25" class="dg"/>
<line x1="305.9" y1="259.45" x2="305.9" y2="449.25" class="dg"/>
<line x1="345.1" y1="259.45" x2="345.1" y2="449.25" class="dg"/>
<line x1="384.3" y1="259.45" x2="384.3" y2="449.25" class="dg"/>
<line x1="31.5" y1="290.5" x2="423.5" y2="290.5" class="dg"/>
<line x1="31.5" y1="322.4" x2="423.5" y2="322.4" class="dg"/>
<line x1="31.5" y1="386.45" x2="423.5" y2="386.45" class="dg"/>
<line x1="31.5" y1="418.5" x2="423.5" y2="418.5" class="dg"/>
<path d="M31.5 259.45 H423.5 M31.5 449.25 H423.5" stroke="#fff" stroke-width="1.2" fill="none"/>
<path d="M31.5 354.55 H423.5" stroke="#fff" stroke-width="1.35" fill="none"/>
<path d="M31.5 352.65 V356.45 M39.34 352.65 V356.45 M47.18 352.65 V356.45 M55.02 352.65 V356.45 M62.86 352.65 V356.45 M70.7 352.65 V356.45 M78.54 352.65 V356.45 M86.38 352.65 V356.45 M94.22 352.65 V356.45 M102.06 352.65 V356.45 M109.9 352.65 V356.45 M117.74 352.65 V356.45 M125.58 352.65 V356.45 M133.42 352.65 V356.45 M141.26 352.65 V356.45 M149.1 352.65 V356.45 M156.94 352.65 V356.45 M164.78 352.65 V356.45 M172.62 352.65 V356.45 M180.46 352.65 V356.45 M188.3 352.65 V356.45 M196.14 352.65 V356.45 M203.98 352.65 V356.45 M211.82 352.65 V356.45 M219.66 352.65 V356.45 M227.5 352.65 V356.45 M235.34 352.65 V356.45 M243.18 352.65 V356.45 M251.02 352.65 V356.45 M258.86 352.65 V356.45 M266.7 352.65 V356.45 M274.54 352.65 V356.45 M282.38 352.65 V356.45 M290.22 352.65 V356.45 M298.06 352.65 V356.45 M305.9 352.65 V356.45 M313.74 352.65 V356.45 M321.58 352.65 V356.45 M329.42 352.65 V356.45 M337.26 352.65 V356.45 M345.1 352.65 V356.45 M352.94 352.65 V356.45 M360.78 352.65 V356.45 M368.62 352.65 V356.45 M376.46 352.65 V356.45 M384.3 352.65 V356.45 M392.14 352.65 V356.45 M399.98 352.65 V356.45 M407.82 352.65 V356.45 M415.66 352.65 V356.45 M423.5 352.65 V356.45" stroke="#fff" stroke-width="0.9" fill="none"/>
<path d="M31.5 363.39 L31.99 365.27 L32.48 367.09 L32.97 368.82 L33.46 370.47 L33.95 372.02 L34.44 373.45 L34.93 374.78 L35.42 375.97 L35.91 377.04 L36.4 377.96 L36.89 378.74 L37.38 379.37 L37.87 379.85 L38.36 380.17 L38.85 380.33 L39.34 380.33 L39.83 380.17 L40.32 379.86 L40.81 379.38 L41.3 378.76 L41.79 377.98 L42.28 377.06 L42.77 376 L43.26 374.8 L43.75 373.48 L44.24 372.05 L44.73 370.5 L45.22 368.86 L45.71 367.12 L46.2 365.31 L46.69 363.43 L47.18 361.5 L47.67 359.52 L48.16 357.51 L48.65 355.49 L49.14 353.45 L49.63 351.43 L50.12 349.42 L50.61 347.44 L51.1 345.51 L51.59 343.63 L52.08 341.81 L52.57 340.08 L53.06 338.43 L53.55 336.88 L54.04 335.45 L54.53 334.12 L55.02 332.93 L55.51 331.86 L56 330.94 L56.49 330.16 L56.98 329.53 L57.47 329.05 L57.96 328.73 L58.45 328.57 L58.94 328.57 L59.43 328.73 L59.92 329.04 L60.41 329.52 L60.9 330.14 L61.39 330.92 L61.88 331.84 L62.37 332.9 L62.86 334.1 L63.35 335.42 L63.84 336.85 L64.33 338.4 L64.82 340.04 L65.31 341.78 L65.8 343.59 L66.29 345.47 L66.78 347.4 L67.27 349.38 L67.76 351.39 L68.25 353.41 L68.74 355.45 L69.23 357.47 L69.72 359.48 L70.21 361.46 L70.7 363.39 L71.19 365.27 L71.68 367.09 L72.17 368.82 L72.66 370.47 L73.15 372.02 L73.64 373.45 L74.13 374.78 L74.62 375.97 L75.11 377.04 L75.6 377.96 L76.09 378.74 L76.58 379.37 L77.07 379.85 L77.56 380.17 L78.05 380.33 L78.54 380.33 L79.03 380.17 L79.52 379.86 L80.01 379.38 L80.5 378.76 L80.99 377.98 L81.48 377.06 L81.97 376 L82.46 374.8 L82.95 373.48 L83.44 372.05 L83.93 370.5 L84.42 368.86 L84.91 367.12 L85.4 365.31 L85.89 363.43 L86.38 361.5 L86.87 359.52 L87.36 357.51 L87.85 355.49 L88.34 353.45 L88.83 351.43 L89.32 349.42 L89.81 347.44 L90.3 345.51 L90.79 343.63 L91.28 341.81 L91.77 340.08 L92.26 338.43 L92.75 336.88 L93.24 335.45 L93.73 334.12 L94.22 332.93 L94.71 331.86 L95.2 330.94 L95.69 330.16 L96.18 329.53 L96.67 329.05 L97.16 328.73 L97.65 328.57 L98.14 328.57 L98.63 328.73 L99.12 329.04 L99.61 329.52 L100.1 330.14 L100.59 330.92 L101.08 331.84 L101.57 332.9 L102.06 334.1 L102.55 335.42 L103.04 336.85 L103.53 338.4 L104.02 340.04 L104.51 341.78 L105 343.59 L105.49 345.47 L105.98 347.4 L106.47 349.38 L106.96 351.39 L107.45 353.41 L107.94 355.45 L108.43 357.47 L108.92 359.48 L109.41 361.46 L109.9 363.39 L110.39 365.27 L110.88 367.09 L111.37 368.82 L111.86 370.47 L112.35 372.02 L112.84 373.45 L113.33 374.78 L113.82 375.97 L114.31 377.04 L114.8 377.96 L115.29 378.74 L115.78 379.37 L116.27 379.85 L116.76 380.17 L117.25 380.33 L117.74 380.33 L118.23 380.17 L118.72 379.86 L119.21 379.38 L119.7 378.76 L120.19 377.98 L120.68 377.06 L121.17 376 L121.66 374.8 L122.15 373.48 L122.64 372.05 L123.13 370.5 L123.62 368.86 L124.11 367.12 L124.6 365.31 L125.09 363.43 L125.58 361.5 L126.07 359.52 L126.56 357.51 L127.05 355.49 L127.54 353.45 L128.03 351.43 L128.52 349.42 L129.01 347.44 L129.5 345.51 L129.99 343.63 L130.48 341.81 L130.97 340.08 L131.46 338.43 L131.95 336.88 L132.44 335.45 L132.93 334.12 L133.42 332.93 L133.91 331.86 L134.4 330.94 L134.89 330.16 L135.38 329.53 L135.87 329.05 L136.36 328.73 L136.85 328.57 L137.34 328.57 L137.83 328.73 L138.32 329.04 L138.81 329.52 L139.3 330.14 L139.79 330.92 L140.28 331.84 L140.77 332.9 L141.26 334.1 L141.75 335.42 L142.24 336.85 L142.73 338.4 L143.22 340.04 L143.71 341.78 L144.2 343.59 L144.69 345.47 L145.18 347.4 L145.67 349.38 L146.16 351.39 L146.65 353.41 L147.14 355.45 L147.63 357.47 L148.12 359.48 L148.61 361.46 L149.1 363.39 L149.59 365.27 L150.08 367.09 L150.57 368.82 L151.06 370.47 L151.55 372.02 L152.04 373.45 L152.53 374.78 L153.02 375.97 L153.51 377.04 L154 377.96 L154.49 378.74 L154.98 379.37 L155.47 379.85 L155.96 380.17 L156.45 380.33 L156.94 380.33 L157.43 380.17 L157.92 379.86 L158.41 379.38 L158.9 378.76 L159.39 377.98 L159.88 377.06 L160.37 376 L160.86 374.8 L161.35 373.48 L161.84 372.05 L162.33 370.5 L162.82 368.86 L163.31 367.12 L163.8 365.31 L164.29 363.43 L164.78 361.5 L165.27 359.52 L165.76 357.51 L166.25 355.49 L166.74 353.45 L167.23 351.43 L167.72 349.42 L168.21 347.44 L168.7 345.51 L169.19 343.63 L169.68 341.81 L170.17 340.08 L170.66 338.43 L171.15 336.88 L171.64 335.45 L172.13 334.12 L172.62 332.93 L173.11 331.86 L173.6 330.94 L174.09 330.16 L174.58 329.53 L175.07 329.05 L175.56 328.73 L176.05 328.57 L176.54 328.57 L177.03 328.73 L177.52 329.04 L178.01 329.52 L178.5 330.14 L178.99 330.92 L179.48 331.84 L179.97 332.9 L180.46 334.1 L180.95 335.42 L181.44 336.85 L181.93 338.4 L182.42 340.04 L182.91 341.78 L183.4 343.59 L183.89 345.47 L184.38 347.4 L184.87 349.38 L185.36 351.39 L185.85 353.41 L186.34 355.45 L186.83 357.47 L187.32 359.48 L187.81 361.46 L188.3 363.39 L188.79 365.27 L189.28 367.09 L189.77 368.82 L190.26 370.47 L190.75 372.02 L191.24 373.45 L191.73 374.78 L192.22 375.97 L192.71 377.04 L193.2 377.96 L193.69 378.74 L194.18 379.37 L194.67 379.85 L195.16 380.17 L195.65 380.33 L196.14 380.33 L196.63 380.17 L197.12 379.86 L197.61 379.38 L198.1 378.76 L198.59 377.98 L199.08 377.06 L199.57 376 L200.06 374.8 L200.55 373.48 L201.04 372.05 L201.53 370.5 L202.02 368.86 L202.51 367.12 L203 365.31 L203.49 363.43 L203.98 361.5 L204.47 359.52 L204.96 357.51 L205.45 355.49 L205.94 353.45 L206.43 351.43 L206.92 349.42 L207.41 347.44 L207.9 345.51 L208.39 343.63 L208.88 341.81 L209.37 340.08 L209.86 338.43 L210.35 336.88 L210.84 335.45 L211.33 334.12 L211.82 332.93 L212.31 331.86 L212.8 330.94 L213.29 330.16 L213.78 329.53 L214.27 329.05 L214.76 328.73 L215.25 328.57 L215.74 328.57 L216.23 328.73 L216.72 329.04 L217.21 329.52 L217.7 330.14 L218.19 330.92 L218.68 331.84 L219.17 332.9 L219.66 334.1 L220.15 335.42 L220.64 336.85 L221.13 338.4 L221.62 340.04 L222.11 341.78 L222.6 343.59 L223.09 345.47 L223.58 347.4 L224.07 349.38 L224.56 351.39 L225.05 353.41 L225.54 355.45 L226.03 357.47 L226.52 359.48 L227.01 361.46 L227.5 363.39 L227.99 365.27 L228.48 367.09 L228.97 368.82 L229.46 370.47 L229.95 372.02 L230.44 373.45 L230.93 374.78 L231.42 375.97 L231.91 377.04 L232.4 377.96 L232.89 378.74 L233.38 379.37 L233.87 379.85 L234.36 380.17 L234.85 380.33 L235.34 380.33 L235.83 380.17 L236.32 379.86 L236.81 379.38 L237.3 378.76 L237.79 377.98 L238.28 377.06 L238.77 376 L239.26 374.8 L239.75 373.48 L240.24 372.05 L240.73 370.5 L241.22 368.86 L241.71 367.12 L242.2 365.31 L242.69 363.43 L243.18 361.5 L243.67 359.52 L244.16 357.51 L244.65 355.49 L245.14 353.45 L245.63 351.43 L246.12 349.42 L246.61 347.44 L247.1 345.51 L247.59 343.63 L248.08 341.81 L248.57 340.08 L249.06 338.43 L249.55 336.88 L250.04 335.45 L250.53 334.12 L251.02 332.93 L251.51 331.86 L252 330.94 L252.49 330.16 L252.98 329.53 L253.47 329.05 L253.96 328.73 L254.45 328.57 L254.94 328.57 L255.43 328.73 L255.92 329.04 L256.41 329.52 L256.9 330.14 L257.39 330.92 L257.88 331.84 L258.37 332.9 L258.86 334.1 L259.35 335.42 L259.84 336.85 L260.33 338.4 L260.82 340.04 L261.31 341.78 L261.8 343.59 L262.29 345.47 L262.78 347.4 L263.27 349.38 L263.76 351.39 L264.25 353.41 L264.74 355.45 L265.23 357.47 L265.72 359.48 L266.21 361.46 L266.7 363.39 L267.19 365.27 L267.68 367.09 L268.17 368.82 L268.66 370.47 L269.15 372.02 L269.64 373.45 L270.13 374.78 L270.62 375.97 L271.11 377.04 L271.6 377.96 L272.09 378.74 L272.58 379.37 L273.07 379.85 L273.56 380.17 L274.05 380.33 L274.54 380.33 L275.03 380.17 L275.52 379.86 L276.01 379.38 L276.5 378.76 L276.99 377.98 L277.48 377.06 L277.97 376 L278.46 374.8 L278.95 373.48 L279.44 372.05 L279.93 370.5 L280.42 368.86 L280.91 367.12 L281.4 365.31 L281.89 363.43 L282.38 361.5 L282.87 359.52 L283.36 357.51 L283.85 355.49 L284.34 353.45 L284.83 351.43 L285.32 349.42 L285.81 347.44 L286.3 345.51 L286.79 343.63 L287.28 341.81 L287.77 340.08 L288.26 338.43 L288.75 336.88 L289.24 335.45 L289.73 334.12 L290.22 332.93 L290.71 331.86 L291.2 330.94 L291.69 330.16 L292.18 329.53 L292.67 329.05 L293.16 328.73 L293.65 328.57 L294.14 328.57 L294.63 328.73 L295.12 329.04 L295.61 329.52 L296.1 330.14 L296.59 330.92 L297.08 331.84 L297.57 332.9 L298.06 334.1 L298.55 335.42 L299.04 336.85 L299.53 338.4 L300.02 340.04 L300.51 341.78 L301 343.59 L301.49 345.47 L301.98 347.4 L302.47 349.38 L302.96 351.39 L303.45 353.41 L303.94 355.45 L304.43 357.47 L304.92 359.48 L305.41 361.46 L305.9 363.39 L306.39 365.27 L306.88 367.09 L307.37 368.82 L307.86 370.47 L308.35 372.02 L308.84 373.45 L309.33 374.78 L309.82 375.97 L310.31 377.04 L310.8 377.96 L311.29 378.74 L311.78 379.37 L312.27 379.85 L312.76 380.17 L313.25 380.33 L313.74 380.33 L314.23 380.17 L314.72 379.86 L315.21 379.38 L315.7 378.76 L316.19 377.98 L316.68 377.06 L317.17 376 L317.66 374.8 L318.15 373.48 L318.64 372.05 L319.13 370.5 L319.62 368.86 L320.11 367.12 L320.6 365.31 L321.09 363.43 L321.58 361.5 L322.07 359.52 L322.56 357.51 L323.05 355.49 L323.54 353.45 L324.03 351.43 L324.52 349.42 L325.01 347.44 L325.5 345.51 L325.99 343.63 L326.48 341.81 L326.97 340.08 L327.46 338.43 L327.95 336.88 L328.44 335.45 L328.93 334.12 L329.42 332.93 L329.91 331.86 L330.4 330.94 L330.89 330.16 L331.38 329.53 L331.87 329.05 L332.36 328.73 L332.85 328.57 L333.34 328.57 L333.83 328.73 L334.32 329.04 L334.81 329.52 L335.3 330.14 L335.79 330.92 L336.28 331.84 L336.77 332.9 L337.26 334.1 L337.75 335.42 L338.24 336.85 L338.73 338.4 L339.22 340.04 L339.71 341.78 L340.2 343.59 L340.69 345.47 L341.18 347.4 L341.67 349.38 L342.16 351.39 L342.65 353.41 L343.14 355.45 L343.63 357.47 L344.12 359.48 L344.61 361.46 L345.1 363.39 L345.59 365.27 L346.08 367.09 L346.57 368.82 L347.06 370.47 L347.55 372.02 L348.04 373.45 L348.53 374.78 L349.02 375.97 L349.51 377.04 L350 377.96 L350.49 378.74 L350.98 379.37 L351.47 379.85 L351.96 380.17 L352.45 380.33 L352.94 380.33 L353.43 380.17 L353.92 379.86 L354.41 379.38 L354.9 378.76 L355.39 377.98 L355.88 377.06 L356.37 376 L356.86 374.8 L357.35 373.48 L357.84 372.05 L358.33 370.5 L358.82 368.86 L359.31 367.12 L359.8 365.31 L360.29 363.43 L360.78 361.5 L361.27 359.52 L361.76 357.51 L362.25 355.49 L362.74 353.45 L363.23 351.43 L363.72 349.42 L364.21 347.44 L364.7 345.51 L365.19 343.63 L365.68 341.81 L366.17 340.08 L366.66 338.43 L367.15 336.88 L367.64 335.45 L368.13 334.12 L368.62 332.93 L369.11 331.86 L369.6 330.94 L370.09 330.16 L370.58 329.53 L371.07 329.05 L371.56 328.73 L372.05 328.57 L372.54 328.57 L373.03 328.73 L373.52 329.04 L374.01 329.52 L374.5 330.14 L374.99 330.92 L375.48 331.84 L375.97 332.9 L376.46 334.1 L376.95 335.42 L377.44 336.85 L377.93 338.4 L378.42 340.04 L378.91 341.78 L379.4 343.59 L379.89 345.47 L380.38 347.4 L380.87 349.38 L381.36 351.39 L381.85 353.41 L382.34 355.45 L382.83 357.47 L383.32 359.48 L383.81 361.46 L384.3 363.39 L384.79 365.27 L385.28 367.09 L385.77 368.82 L386.26 370.47 L386.75 372.02 L387.24 373.45 L387.73 374.78 L388.22 375.97 L388.71 377.04 L389.2 377.96 L389.69 378.74 L390.18 379.37 L390.67 379.85 L391.16 380.17 L391.65 380.33 L392.14 380.33 L392.63 380.17 L393.12 379.86 L393.61 379.38 L394.1 378.76 L394.59 377.98 L395.08 377.06 L395.57 376 L396.06 374.8 L396.55 373.48 L397.04 372.05 L397.53 370.5 L398.02 368.86 L398.51 367.12 L399 365.31 L399.49 363.43 L399.98 361.5 L400.47 359.52 L400.96 357.51 L401.45 355.49 L401.94 353.45 L402.43 351.43 L402.92 349.42 L403.41 347.44 L403.9 345.51 L404.39 343.63 L404.88 341.81 L405.37 340.08 L405.86 338.43 L406.35 336.88 L406.84 335.45 L407.33 334.12 L407.82 332.93 L408.31 331.86 L408.8 330.94 L409.29 330.16 L409.78 329.53 L410.27 329.05 L410.76 328.73 L411.25 328.57 L411.74 328.57 L412.23 328.73 L412.72 329.04 L413.21 329.52 L413.7 330.14 L414.19 330.92 L414.68 331.84 L415.17 332.9 L415.66 334.1 L416.15 335.42 L416.64 336.85 L417.13 338.4 L417.62 340.04 L418.11 341.78 L418.6 343.59 L419.09 345.47 L419.58 347.4 L420.07 349.38 L420.56 351.39 L421.05 353.41 L421.54 355.45 L422.03 357.47 L422.52 359.48 L423.01 361.46 L423.5 363.39" stroke="#ff0000" stroke-width="1.5" fill="none" stroke-linejoin="round"/>
<line x1="31.5" y1="259.45" x2="31.5" y2="449.25" stroke="#ff0000" stroke-width="1.4"/>
<line x1="423.5" y1="259.45" x2="423.5" y2="449.25" stroke="#0000ff" stroke-width="1.4"/>
<line x1="31.5" y1="356.85" x2="31.5" y2="363.85" stroke="#fff" stroke-width="1.4"/>
<path d="M24.8 253.2 H38.2 L31.5 260 Z" fill="#00e8f0"/>
<path d="M31.5 254.6 V257.4" stroke="#001018" stroke-width="1.3"/>
<path d="M416.8 253.2 H430.2 L423.5 260 Z" fill="#f4f000"/>
<path d="M422.3 254.7 H424.4 L422.5 257.1 H424.8" stroke="#000" stroke-width="1.15" fill="none"/></svg>
<div class="a " style="left:439.3px;top:233.4px;width:1.6px;height:406.6px;background:linear-gradient(90deg,#e4e4e4,#8c8c8c);"></div>
<div class="a " style="left:13.2px;top:466px;width:427.6px;height:11.2px;background-image:repeating-conic-gradient(#fff 0 25%, #e6e6e6 0 50%);background-size:2px 2px;"></div>
<div class="a " style="left:13.2px;top:466px;width:15.6px;height:11.2px;background:#f0f0f0;border-top:1px solid #fff;border-left:1px solid #fff;border-right:1px solid #505050;border-bottom:1px solid #505050;box-sizing:border-box;"></div>
<div class="a " style="left:14.2px;top:467px;width:13.6px;height:9.2px;border-top:1px solid #e8e8e8;border-left:1px solid #e8e8e8;border-right:1px solid #a0a0a0;border-bottom:1px solid #a0a0a0;box-sizing:border-box;"></div>
<div class="a " style="left:424.4px;top:466px;width:16.2px;height:11.2px;background:#f0f0f0;border-top:1px solid #fff;border-left:1px solid #fff;border-right:1px solid #505050;border-bottom:1px solid #505050;box-sizing:border-box;"></div>
<div class="a " style="left:425.4px;top:467px;width:14.2px;height:9.2px;border-top:1px solid #e8e8e8;border-left:1px solid #e8e8e8;border-right:1px solid #a0a0a0;border-bottom:1px solid #a0a0a0;box-sizing:border-box;"></div>
<div class="a " style="left:28.8px;top:466px;width:359px;height:11.2px;background:#f0f0f0;border-top:1px solid #fff;border-left:1px solid #fff;border-right:1px solid #505050;border-bottom:1px solid #505050;box-sizing:border-box;"></div>
<div class="a " style="left:29.8px;top:467px;width:357px;height:9.2px;border-top:1px solid #e8e8e8;border-left:1px solid #e8e8e8;border-right:1px solid #a0a0a0;border-bottom:1px solid #a0a0a0;box-sizing:border-box;"></div>
<div class="a " style="left:13.2px;top:465.8px;width:427.4px;height:0.9px;background:#7c7c7c;"></div>
<svg class="a" style="left:0;top:0" width="460" height="579" viewBox="0 0 460 579"><path d="M18.7 471.5 L21.9 468.6 V474.4 Z M434.4 471.6 L431.2 468.7 V474.5 Z" fill="#000"/></svg>
<div class="a " style="left:14px;top:480px;width:49.4px;height:50.4px;border-top:1px solid #fff;border-left:1px solid #fff;border-right:1px solid #8a8a8a;border-bottom:1px solid #8a8a8a;box-sizing:border-box;"></div>
<div class="a t" style="left:21.4px;top:492px;font-size:9.7px;line-height:9.7px;color:#000;transform-origin:0 8.21px;transform:scale(0.786,1);">T1</div>
<div class="a t" style="left:21.4px;top:504px;font-size:9.7px;line-height:9.7px;color:#000;transform-origin:0 8.21px;transform:scale(0.786,1);">T2</div>
<div class="a t" style="left:21.4px;top:519px;font-size:9.7px;line-height:9.7px;color:#000;transform-origin:0 8.21px;transform:scale(0.851,1);">T2-T1</div>
<div class="a " style="left:36px;top:487.2px;width:12.4px;height:13.2px;background:#c8c8c8;border-top:1px solid #fff;border-left:1px solid #fff;border-right:1px solid #505050;border-bottom:1px solid #505050;box-sizing:border-box;"></div>
<div class="a " style="left:37px;top:488.2px;width:10.4px;height:11.2px;border-top:1px solid #e8e8e8;border-left:1px solid #e8e8e8;border-right:1px solid #a0a0a0;border-bottom:1px solid #a0a0a0;box-sizing:border-box;"></div>
<div class="a " style="left:48.4px;top:487.2px;width:12.5px;height:13.2px;background:#c8c8c8;border-top:1px solid #fff;border-left:1px solid #fff;border-right:1px solid #505050;border-bottom:1px solid #505050;box-sizing:border-box;"></div>
<div class="a " style="left:49.4px;top:488.2px;width:10.5px;height:11.2px;border-top:1px solid #e8e8e8;border-left:1px solid #e8e8e8;border-right:1px solid #a0a0a0;border-bottom:1px solid #a0a0a0;box-sizing:border-box;"></div>
<svg class="a" style="left:0;top:0" width="80" height="579" viewBox="0 0 80 579"><path d="M37.8 493.6 l5.2 -4.9 v3 h4.3 v3.8 h-4.3 v3 z M59.2 493.6 l-5.2 -4.9 v3 h-4.3 v3.8 h4.3 v3 z" fill="#ff0000"/></svg>
<div class="a " style="left:36px;top:502.2px;width:12.4px;height:13.2px;background:#c8c8c8;border-top:1px solid #fff;border-left:1px solid #fff;border-right:1px solid #505050;border-bottom:1px solid #505050;box-sizing:border-box;"></div>
<div class="a " style="left:37px;top:503.2px;width:10.4px;height:11.2px;border-top:1px solid #e8e8e8;border-left:1px solid #e8e8e8;border-right:1px solid #a0a0a0;border-bottom:1px solid #a0a0a0;box-sizing:border-box;"></div>
<div class="a " style="left:48.4px;top:502.2px;width:12.5px;height:13.2px;background:#c8c8c8;border-top:1px solid #fff;border-left:1px solid #fff;border-right:1px solid #505050;border-bottom:1px solid #505050;box-sizing:border-box;"></div>
<div class="a " style="left:49.4px;top:503.2px;width:10.5px;height:11.2px;border-top:1px solid #e8e8e8;border-left:1px solid #e8e8e8;border-right:1px solid #a0a0a0;border-bottom:1px solid #a0a0a0;box-sizing:border-box;"></div>
<svg class="a" style="left:0;top:0" width="80" height="579" viewBox="0 0 80 579"><path d="M37.8 508.6 l5.2 -4.9 v3 h4.3 v3.8 h-4.3 v3 z M59.2 508.6 l-5.2 -4.9 v3 h-4.3 v3.8 h4.3 v3 z" fill="#ff0000"/></svg>
<div class="a " style="left:64.2px;top:480px;width:267.8px;height:50.4px;background:#fff;border-top:1px solid #8a8a8a;border-left:1px solid #8a8a8a;border-right:1px solid #fff;border-bottom:1px solid #fff;box-sizing:border-box;"></div>
<div class="a t" style="left:89.2px;top:483px;font-size:9.7px;line-height:9.7px;color:#000;transform-origin:0 8.21px;transform:scale(0.933,1);">Time</div>
<div class="a t" style="left:138.2px;top:483px;font-size:9.7px;line-height:9.7px;color:#000;transform-origin:0 8.21px;transform:scale(0.932,1);">Channel_A</div>
<div class="a t" style="left:221.4px;top:483px;font-size:9.7px;line-height:9.7px;color:#000;transform-origin:0 8.21px;transform:scale(0.913,1);">Channel_B</div>
<div class="a t" style="left:80.4px;top:495px;font-size:9.7px;line-height:9.7px;color:#000;transform-origin:0 8.21px;transform:scale(0.950,1);">0.000 s</div>
<div class="a t" style="left:71.6px;top:507px;font-size:9.7px;line-height:9.7px;color:#000;transform-origin:0 8.21px;transform:scale(0.947,1);">100.000 ms</div>
<div class="a t" style="left:71.6px;top:519px;font-size:9.7px;line-height:9.7px;color:#000;transform-origin:0 8.21px;transform:scale(0.947,1);">100.000 ms</div>
<div class="a t" style="left:135.2px;top:495px;font-size:9.7px;line-height:9.7px;color:#000;transform-origin:0 8.21px;transform:scale(0.937,1);">789.411 nV</div>
<div class="a t" style="left:135.2px;top:507px;font-size:9.7px;line-height:9.7px;color:#000;transform-origin:0 8.21px;transform:scale(0.950,1);">-19.187 mV</div>
<div class="a t" style="left:135.2px;top:519px;font-size:9.7px;line-height:9.7px;color:#000;transform-origin:0 8.21px;transform:scale(0.950,1);">-19.188 mV</div>
<div class="a " style="left:351.2px;top:487px;width:52.4px;height:13.8px;background:#f0f0f0;border-top:1px solid #fff;border-left:1px solid #fff;border-right:1px solid #505050;border-bottom:1px solid #505050;box-sizing:border-box;"></div>
<div class="a " style="left:352.2px;top:488px;width:50.4px;height:11.8px;border-top:1px solid #e8e8e8;border-left:1px solid #e8e8e8;border-right:1px solid #a0a0a0;border-bottom:1px solid #a0a0a0;box-sizing:border-box;"></div>
<div class="a t" style="left:359.4px;top:490px;font-size:9.7px;line-height:9.7px;color:#000;transform-origin:0 8.21px;transform:scale(1.003,1);">Reverse</div>
<div class="a " style="left:351.2px;top:502.4px;width:52.4px;height:14px;background:#f0f0f0;border-top:1px solid #fff;border-left:1px solid #fff;border-right:1px solid #505050;border-bottom:1px solid #505050;box-sizing:border-box;"></div>
<div class="a " style="left:352.2px;top:503.4px;width:50.4px;height:12px;border-top:1px solid #e8e8e8;border-left:1px solid #e8e8e8;border-right:1px solid #a0a0a0;border-bottom:1px solid #a0a0a0;box-sizing:border-box;"></div>
<div class="a t" style="left:366.4px;top:506px;font-size:9.7px;line-height:9.7px;color:#000;transform-origin:0 8.21px;transform:scale(0.996,1);">Save</div>
<div class="a t" style="left:396.4px;top:524px;font-size:9.7px;line-height:9.7px;color:#000;transform-origin:0 8.21px;transform:scale(0.948,1);">GND</div>
<svg class="a" style="left:418.8px;top:520px" width="14" height="14" viewBox="0 0 14 14"><circle cx="7" cy="7" r="5" fill="#f4f4f4"/><path d="M3.1 10.4 A5 5 0 0 1 10.4 3.1" stroke="#686868" stroke-width="1.45" fill="none"/><path d="M10.9 3.6 A5 5 0 0 1 3.6 10.9" stroke="#fdfdfd" stroke-width="1.2" fill="none"/><path d="M4 9.6 A4 4 0 0 1 9.6 4" stroke="#a8a8a8" stroke-width="1" fill="none"/><circle cx="7" cy="7" r="1.8" fill="#8c8c8c"/></svg>
<div class="a " style="left:14px;top:538.2px;width:101.2px;height:61.8px;border:1px solid #a5a5a5;box-sizing:border-box;box-shadow:1px 1px 0 #fff, inset 1px 1px 0 #fff;"></div>
<div class="a " style="left:19.6px;top:536.2px;width:44.6px;height:5px;background:#f0f0f0;"></div>
<div class="a t" style="left:22.1px;top:534px;font-size:9.7px;line-height:9.7px;color:#000;transform-origin:0 8.21px;transform:scale(0.937,1);">Timebase</div>
<div class="a " style="left:116.4px;top:538.2px;width:97.8px;height:61.8px;border:1px solid #a5a5a5;box-sizing:border-box;box-shadow:1px 1px 0 #fff, inset 1px 1px 0 #fff;"></div>
<div class="a " style="left:123px;top:536.2px;width:47.5px;height:5px;background:#f0f0f0;"></div>
<div class="a t" style="left:125.5px;top:534px;font-size:9.7px;line-height:9.7px;color:#000;transform-origin:0 8.21px;transform:scale(0.948,1);">Channel A</div>
<div class="a " style="left:215.4px;top:538.2px;width:100.2px;height:61.8px;border:1px solid #a5a5a5;box-sizing:border-box;box-shadow:1px 1px 0 #fff, inset 1px 1px 0 #fff;"></div>
<div class="a " style="left:220.9px;top:536.2px;width:47px;height:5px;background:#f0f0f0;"></div>
<div class="a t" style="left:223.4px;top:534px;font-size:9.7px;line-height:9.7px;color:#000;transform-origin:0 8.21px;transform:scale(0.927,1);">Channel B</div>
<div class="a " style="left:316.8px;top:538.2px;width:122px;height:61.8px;border:1px solid #a5a5a5;box-sizing:border-box;box-shadow:1px 1px 0 #fff, inset 1px 1px 0 #fff;"></div>
<div class="a " style="left:322.5px;top:536.2px;width:33px;height:5px;background:#f0f0f0;"></div>
<div class="a t" style="left:325px;top:534px;font-size:9.7px;line-height:9.7px;color:#000;transform-origin:0 8.21px;transform:scale(0.923,1);">Trigger</div>
<div class="a t" style="left:18.2px;top:550px;font-size:9.7px;line-height:9.7px;color:#000;transform-origin:0 8.21px;transform:scale(0.914,1);">Scale</div>
<div class="a " style="left:43.3px;top:545.6px;width:69.3px;height:16.2px;background:#fff;border-top:1px solid #828282;border-left:1px solid #828282;border-right:1px solid #fff;border-bottom:1px solid #fff;box-sizing:border-box;"></div>
<div class="a " style="left:44.3px;top:546.6px;width:67.3px;height:14.2px;border-top:1px solid #4a4a4a;border-left:1px solid #4a4a4a;border-right:1px solid #e3e3e3;border-bottom:1px solid #e3e3e3;box-sizing:border-box;"></div>
<div class="a t" style="left:49px;top:550px;font-size:9.7px;line-height:9.7px;color:#000;transform-origin:0 8.21px;transform:scale(0.983,1);">10 ms/Div</div>
<div class="a t" style="left:18.2px;top:568px;font-size:9.7px;line-height:9.7px;color:#000;transform-origin:0 8.21px;transform:scale(0.934,1);">X position</div>
<div class="a " style="left:63.4px;top:563.3px;width:49.2px;height:26.7px;background:#fff;border-top:1px solid #828282;border-left:1px solid #828282;border-right:1px solid #fff;border-bottom:1px solid #fff;box-sizing:border-box;"></div>
<div class="a " style="left:64.4px;top:564.3px;width:47.2px;height:24.7px;border-top:1px solid #4a4a4a;border-left:1px solid #4a4a4a;border-right:1px solid #e3e3e3;border-bottom:1px solid #e3e3e3;box-sizing:border-box;"></div>
<div class="a t" style="left:68.2px;top:568px;font-size:9.7px;line-height:9.7px;color:#000;transform-origin:0 8.21px;transform:scale(0.855,1);">0</div>
<div class="a t" style="left:121.2px;top:552px;font-size:9.7px;line-height:9.7px;color:#000;transform-origin:0 8.21px;transform:scale(0.931,1);">Scale</div>
<div class="a " style="left:146.6px;top:545.6px;width:66px;height:16.2px;background:#fff;border-top:1px solid #828282;border-left:1px solid #828282;border-right:1px solid #fff;border-bottom:1px solid #fff;box-sizing:border-box;"></div>
<div class="a " style="left:147.6px;top:546.6px;width:64px;height:14.2px;border-top:1px solid #4a4a4a;border-left:1px solid #4a4a4a;border-right:1px solid #e3e3e3;border-bottom:1px solid #e3e3e3;box-sizing:border-box;"></div>
<div class="a t" style="left:152px;top:550px;font-size:9.7px;line-height:9.7px;color:#000;transform-origin:0 8.21px;transform:scale(0.966,1);">100 mV/Div</div>
<div class="a t" style="left:121.2px;top:569px;font-size:9.7px;line-height:9.7px;color:#000;transform-origin:0 8.21px;transform:scale(0.966,1);">Y position</div>
<div class="a " style="left:163.4px;top:563.3px;width:49.2px;height:26.7px;background:#fff;border-top:1px solid #828282;border-left:1px solid #828282;border-right:1px solid #fff;border-bottom:1px solid #fff;box-sizing:border-box;"></div>
<div class="a " style="left:164.4px;top:564.3px;width:47.2px;height:24.7px;border-top:1px solid #4a4a4a;border-left:1px solid #4a4a4a;border-right:1px solid #e3e3e3;border-bottom:1px solid #e3e3e3;box-sizing:border-box;"></div>
<div class="a t" style="left:168.2px;top:568px;font-size:9.7px;line-height:9.7px;color:#000;transform-origin:0 8.21px;transform:scale(0.855,1);">0</div>
<div class="a t" style="left:218.6px;top:552px;font-size:9.7px;line-height:9.7px;color:#000;transform-origin:0 8.21px;transform:scale(0.914,1);">Scale</div>
<div class="a " style="left:246.1px;top:545.6px;width:66.7px;height:16.2px;background:#fff;border-top:1px solid #828282;border-left:1px solid #828282;border-right:1px solid #fff;border-bottom:1px solid #fff;box-sizing:border-box;"></div>
<div class="a " style="left:247.1px;top:546.6px;width:64.7px;height:14.2px;border-top:1px solid #4a4a4a;border-left:1px solid #4a4a4a;border-right:1px solid #e3e3e3;border-bottom:1px solid #e3e3e3;box-sizing:border-box;"></div>
<div class="a t" style="left:251.2px;top:551px;font-size:9.7px;line-height:9.7px;color:#000;transform-origin:0 8.21px;transform:scale(0.966,1);">500 mV/Div</div>
<div class="a t" style="left:218.6px;top:570px;font-size:9.7px;line-height:9.7px;color:#000;transform-origin:0 8.21px;transform:scale(0.957,1);">Y position</div>
<div class="a " style="left:264px;top:563.4px;width:48.8px;height:26.6px;background:#fff;border-top:1px solid #828282;border-left:1px solid #828282;border-right:1px solid #fff;border-bottom:1px solid #fff;box-sizing:border-box;"></div>
<div class="a " style="left:265px;top:564.4px;width:46.8px;height:24.6px;border-top:1px solid #4a4a4a;border-left:1px solid #4a4a4a;border-right:1px solid #e3e3e3;border-bottom:1px solid #e3e3e3;box-sizing:border-box;"></div>
<div class="a t" style="left:269.2px;top:568px;font-size:9.7px;line-height:9.7px;color:#000;transform-origin:0 8.21px;transform:scale(0.855,1);">0</div>
<div class="a t" style="left:321.6px;top:549px;font-size:9.7px;line-height:9.7px;color:#000;transform-origin:0 8.21px;transform:scale(0.874,1);">Edge</div>
<div class="a " style="left:354.4px;top:544.3px;width:19.6px;height:13.3px;background:#c0c0c0;border:1px solid #6a6a6a;border-right-color:#fff;border-bottom-color:#fff;box-sizing:border-box;"></div>
<div class="a " style="left:377.2px;top:544.3px;width:20.6px;height:13.5px;background:#c0c0c0;border-top:1px solid #fff;border-left:1px solid #fff;border-right:1px solid #505050;border-bottom:1px solid #505050;box-sizing:border-box;"></div>
<div class="a " style="left:378.2px;top:545.3px;width:18.6px;height:11.5px;border-top:1px solid #e8e8e8;border-left:1px solid #e8e8e8;border-right:1px solid #a0a0a0;border-bottom:1px solid #a0a0a0;box-sizing:border-box;"></div>
<svg class="a" style="left:0;top:0" width="460" height="579" viewBox="0 0 460 579"><path d="M359 554.5 H363.5 V547.6 H368 M362 550.9 H366.2" stroke="#000" stroke-width="1.15" fill="none"/><path d="M382.4 547.6 H387 V554.5 H391 M384.6 551.1 H388.6" stroke="#000" stroke-width="1.15" fill="none"/></svg>
<svg class="a" style="left:418.4px;top:542.9px" width="14" height="14" viewBox="0 0 14 14"><circle cx="7" cy="7" r="5" fill="#f4f4f4"/><path d="M3.1 10.4 A5 5 0 0 1 10.4 3.1" stroke="#686868" stroke-width="1.45" fill="none"/><path d="M10.9 3.6 A5 5 0 0 1 3.6 10.9" stroke="#fdfdfd" stroke-width="1.2" fill="none"/><path d="M4 9.6 A4 4 0 0 1 9.6 4" stroke="#a8a8a8" stroke-width="1" fill="none"/></svg>
<div class="a t" style="left:321.6px;top:567px;font-size:9.7px;line-height:9.7px;color:#000;transform-origin:0 8.21px;transform:scale(0.965,1);">Level</div>
<div class="a " style="left:353.7px;top:563.2px;width:50.6px;height:26.8px;background:#fff;border-top:1px solid #828282;border-left:1px solid #828282;border-right:1px solid #fff;border-bottom:1px solid #fff;box-sizing:border-box;"></div>
<div class="a " style="left:354.7px;top:564.2px;width:48.6px;height:24.8px;border-top:1px solid #4a4a4a;border-left:1px solid #4a4a4a;border-right:1px solid #e3e3e3;border-bottom:1px solid #e3e3e3;box-sizing:border-box;"></div>
<div class="a " style="left:404.3px;top:563.2px;width:31.5px;height:26.8px;background:#fff;border-top:1px solid #828282;border-left:1px solid #828282;border-right:1px solid #fff;border-bottom:1px solid #fff;box-sizing:border-box;"></div>
<div class="a " style="left:405.3px;top:564.2px;width:29.5px;height:24.8px;border-top:1px solid #4a4a4a;border-left:1px solid #4a4a4a;border-right:1px solid #e3e3e3;border-bottom:1px solid #e3e3e3;box-sizing:border-box;"></div>
<div class="a t" style="left:358.4px;top:567px;font-size:9.7px;line-height:9.7px;color:#000;transform-origin:0 8.21px;transform:scale(0.818,1);">0</div>
<div class="a t" style="left:418.9px;top:566px;font-size:9.7px;line-height:9.7px;color:#000;transform-origin:0 8.21px;transform:scale(1.008,1);">V</div>
</div>
</body></html>
